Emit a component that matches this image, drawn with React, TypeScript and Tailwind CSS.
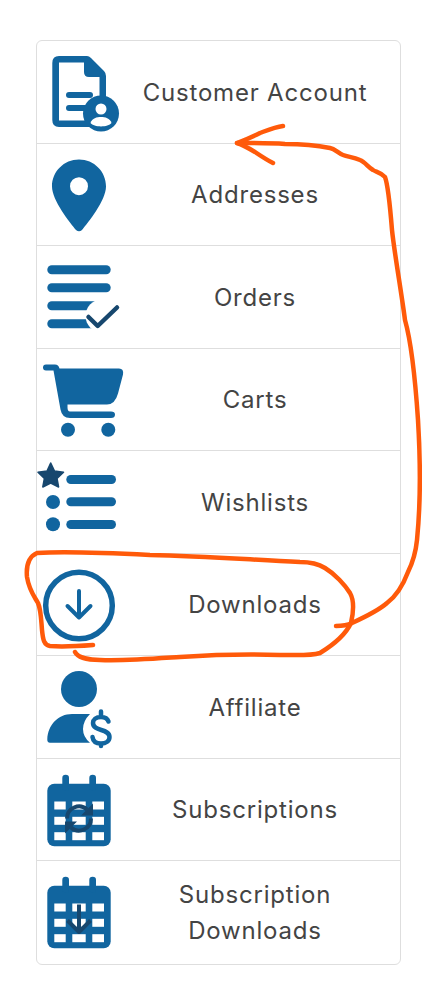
const BLUE = "#11659f";
const DARK = "#17476e";

function Doc() {
  return (
    <svg width="73" height="102" viewBox="37 41 73 102" className="overflow-visible">
      <path fillRule="evenodd" fill={BLUE} d="M59 56 H87 Q89 56 91 58 L104 71 Q106 73 106 76 V120 Q106 127 99 127 H59 Q52.3 127 52.3 120 V63 Q52.3 56 59 56 Z M59 62.5 V120.5 H99.5 V77 H89 Q84 77 84 72 V62.5 Z" />
      <rect x="66" y="92" width="27" height="6" rx="3" fill={BLUE} />
      <rect x="66" y="105" width="27" height="6" rx="3" fill={BLUE} />
      <circle cx="101" cy="113.5" r="18" fill={BLUE} />
      <circle cx="101" cy="109" r="5.5" fill="#fff" />
      <path d="M90.5 123 C92 118 97 117 101 117 C105 117 110 118 111.5 123 C108 127.5 94 127.5 90.5 123 Z" fill="#fff" />
    </svg>
  );
}

function Pin() {
  return (
    <svg width="73" height="102" viewBox="37 143.5 73 102" className="overflow-visible">
      <path fillRule="evenodd" fill={BLUE} d="M79 159 C64 159 52 171 52 186 C52 200 70 222 76 229.5 Q79 232 82 229.5 C88 222 106 200 106 186 C106 171 94 159 79 159 Z M79 176.7 A9 9 0 1 1 79 194.7 A9 9 0 1 1 79 176.7 Z" />
    </svg>
  );
}

function Orders() {
  return (
    <svg width="73" height="102" viewBox="37 246 73 102" className="overflow-visible">
      <rect x="47.3" y="265.3" width="63.4" height="9" rx="4.5" fill={BLUE} />
      <rect x="47.3" y="283.3" width="63.4" height="9" rx="4.5" fill={BLUE} />
      <rect x="47.3" y="301.3" width="50" height="9" rx="4.5" fill={BLUE} />
      <rect x="47.3" y="319.3" width="50" height="9" rx="4.5" fill={BLUE} />
      <circle cx="102" cy="316" r="16.5" fill="#fff" />
      <path d="M88.5 317 L97.7 326 L117 307.5" fill="none" stroke={DARK} strokeWidth="4.5" strokeLinecap="round" strokeLinejoin="round" />
    </svg>
  );
}

function Cart() {
  return (
    <svg width="73" height="102" viewBox="37 348.5 73 102" className="overflow-visible">
      <path fill={BLUE} d="M46 364 H55 Q58.5 364 59.5 368 H119 Q124 368 123 374 L118 393 Q115 404 107 404 H67.5 V407 Q67.5 411 70 411 H111 Q115 411 115 414 Q115 417.5 111 417.5 H70 Q62 417.5 60.5 409 L53.5 370 H46 Q43 370 43 367 Q43 364 46 364 Z" />
      <circle cx="68" cy="429.3" r="7" fill={BLUE} />
      <circle cx="108.3" cy="429.3" r="7" fill={BLUE} />
    </svg>
  );
}

function Wish() {
  return (
    <svg width="73" height="102" viewBox="37 451 73 102" className="overflow-visible">
      <rect x="66.3" y="475" width="49.7" height="9" rx="4.5" fill={BLUE} />
      <rect x="66.3" y="497.3" width="49.7" height="9" rx="4.5" fill={BLUE} />
      <rect x="66.3" y="520" width="49.7" height="9" rx="4.5" fill={BLUE} />
      <circle cx="53" cy="502" r="7" fill={BLUE} />
      <circle cx="53" cy="524.3" r="7" fill={BLUE} />
      <path d="M50.7 463 L54.5 471 L63.5 472.3 L57 478.5 L58.6 487 L50.7 483 L42.8 487 L44.4 478.5 L38 472.3 L47 471 Z" fill={DARK} stroke={DARK} strokeWidth="1.5" strokeLinejoin="round" />
    </svg>
  );
}

function Download() {
  return (
    <svg width="73" height="102" viewBox="37 553.5 73 102" className="overflow-visible">
      <circle cx="79" cy="605" r="33.3" fill="none" stroke={BLUE} strokeWidth="5.5" />
      <path d="M79 590.5 V617 M67.5 605.5 L79 617 L90.5 605.5" fill="none" stroke={BLUE} strokeWidth="4" strokeLinecap="round" strokeLinejoin="round" />
    </svg>
  );
}

function Affiliate() {
  return (
    <svg width="73" height="102" viewBox="37 656 73 102" className="overflow-visible">
      <circle cx="79" cy="689" r="18" fill={BLUE} />
      <path fill={BLUE} d="M47.3 739 C48 725 58 714 72 714 H90 Q83 721 83 729 Q83 737 90 742.7 H50 Q47 742.7 47.3 739 Z" />
      <path d="M108.5 721.5 Q107 717 101 717 C96 717 93 719.5 93 723 C93 732 109.5 728 109.5 737 C109.5 741 106 743.5 101 743.5 C96 743.5 93 741 92.5 737 M101 711.5 V717 M101 743.5 V746" fill="none" stroke={BLUE} strokeWidth="4.5" strokeLinecap="round" strokeLinejoin="round" />
    </svg>
  );
}

function Calendar({ top, children }: { top: number; children: React.ReactNode }) {
  const cols = [[54.3, 11.4], [72.3, 13.4], [92.3, 11.7]];
  const rows = [801, 816.3, 831.7];
  return (
    <svg width="73" height="102" viewBox={`37 ${top} 73 102`} className="overflow-visible">
      <g transform={`translate(0 ${top - 758.5})`}>
        <rect x="47.3" y="783.3" width="63.4" height="62.4" rx="7" fill={BLUE} />
        <rect x="62.3" y="774.3" width="6.7" height="16" rx="3.3" fill={BLUE} />
        <rect x="89.3" y="774.3" width="6.7" height="16" rx="3.3" fill={BLUE} />
        {rows.map((y) =>
          cols.map(([x, w]) => <rect key={`${x}-${y}`} x={x} y={y} width={w} height="8" fill="#fff" />)
        )}
        {children}
      </g>
    </svg>
  );
}

const items: { label: React.ReactNode; icon: React.ReactNode }[] = [
  { label: "Customer Account", icon: <Doc /> },
  { label: "Addresses", icon: <Pin /> },
  { label: "Orders", icon: <Orders /> },
  { label: "Carts", icon: <Cart /> },
  { label: "Wishlists", icon: <Wish /> },
  { label: "Downloads", icon: <Download /> },
  { label: "Affiliate", icon: <Affiliate /> },
  {
    label: "Subscriptions",
    icon: (
      <Calendar top={758.5}>
        <path d="M67 818 A12 12 0 0 1 87 809 M91 818 A12 12 0 0 1 71 827" fill="none" stroke={DARK} strokeWidth="4" />
        <path d="M93 803 V815 H81 Z M65 833 V821 H77 Z" fill={DARK} />
      </Calendar>
    ),
  },
  {
    label: (
      <>
        Subscription
        <br />
        Downloads
      </>
    ),
    icon: (
      <Calendar top={861}>
        <path d="M79 803 V830 M67.5 819 L79 830.5 L90.5 819" transform="translate(0 -1)" fill="none" stroke={DARK} strokeWidth="4" strokeLinejoin="round" />
      </Calendar>
    ),
  },
];

export default function App() {
  return (
    <div className="relative w-[422px] h-[985px] bg-white overflow-hidden pt-[40px] pl-[36px]" style={{ fontFamily: "Inter, 'Liberation Sans', sans-serif" }}>
      <div className="w-[365px] rounded-md border border-[#dedede] bg-white">
        {items.map((it, i) => (
          <div key={i} className={`flex h-[102.5px] items-center ${i < items.length - 1 ? "border-b border-[#dedede]" : ""}`}>
            <div className="w-[73px] shrink-0 self-start">{it.icon}</div>
            <div className="flex-1 pt-[2px] text-center text-[24px] leading-[36px] tracking-[0.8px] text-[#444444]">{it.label}</div>
          </div>
        ))}
      </div>
      <svg className="absolute left-0 top-0" width="422" height="985" viewBox="0 0 422 985" fill="none" stroke="#ff5a0a" strokeWidth="4.5" strokeLinecap="round" strokeLinejoin="round">
        <path d="M93 645 C80 646 62 647 50 646 C44 645 43 640 42 630 C41 618 41 610 38 603 C34 596 29 590 27 577 C26 566 28 557 37 553 C70 551 110 553 150 555 C200 556 240 559 300 562 C310 562 317 563 325 568 C335 574 345 585 350 593 C354 600 354 610 351 623 C345 636 333 645 320 653 C310 656 300 655 280 655 C250 654 210 655 180 657 C150 659 125 661 100 660 C90 660 78 658 75 652" />
        <path d="M336 626 C342 626 348 625 352 623 C365 617 378 611 387 603 C395 597 402 588 408 572 C414 560 416 550 417 540 C420 510 421 470 418 420 C416 390 412 345 405 320 C401 290 394 250 392 230 C390 205 388 185 385 177 C380 172 376 172 373 170 C368 167 365 162 360 160 C353 157 348 157 343 155 C338 153 335 149 330 148 C315 145 300 144 285 144 C270 143 250 143 237 143" />
        <path d="M283 126 C275 127 268 130 260 133 C252 137 245 140 237 143 C243 145 250 149 255 152 C261 156 267 160 273 163" />
      </svg>
    </div>
  );
}
